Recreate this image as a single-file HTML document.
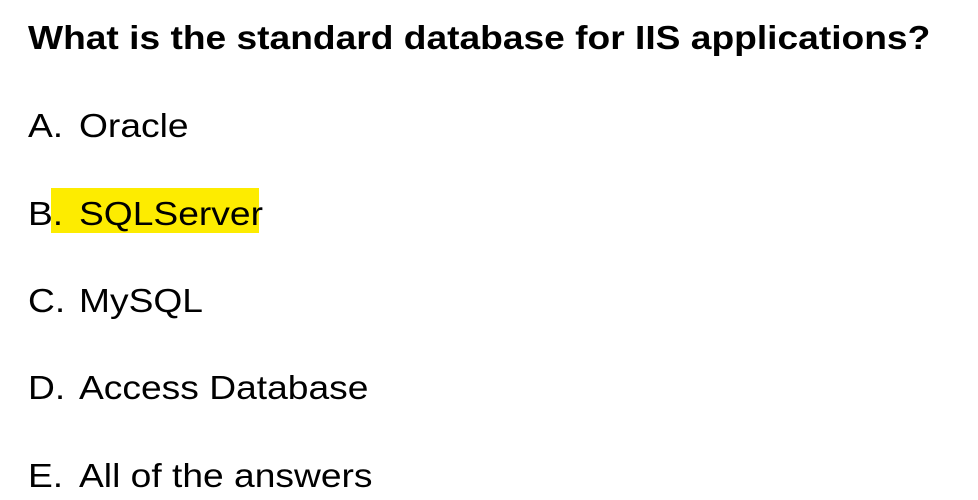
<!DOCTYPE html>
<html><head><style>
body{margin:0;width:978px;height:500px;background:#fff;overflow:hidden;font-family:"Liberation Sans",Arial,sans-serif;color:#000;position:relative}
.t{position:absolute;left:28px;top:19px;font-size:33px;font-weight:bold;white-space:nowrap;transform:scaleX(1.126);transform-origin:0 0}
.o{position:absolute;font-size:33px;white-space:nowrap;transform:scaleX(1.127);transform-origin:0 0}
.hl{position:absolute;left:51px;top:188px;width:208px;height:45px;background:#fdec00}
</style></head><body>
<div class="t">What is the standard database for IIS applications?</div>
<div class="hl"></div>
<div class="o" style="left:28px;top:107px">A.</div><div class="o" style="left:79px;top:107px">Oracle</div>
<div class="o" style="left:28px;top:195px">B.</div><div class="o" style="left:79px;top:195px">SQLServer</div>
<div class="o" style="left:28px;top:282px">C.</div><div class="o" style="left:79px;top:282px">MySQL</div>
<div class="o" style="left:28px;top:369px">D.</div><div class="o" style="left:79px;top:369px">Access Database</div>
<div class="o" style="left:28px;top:457px">E.</div><div class="o" style="left:79px;top:457px">All of the answers</div>
</body></html>
